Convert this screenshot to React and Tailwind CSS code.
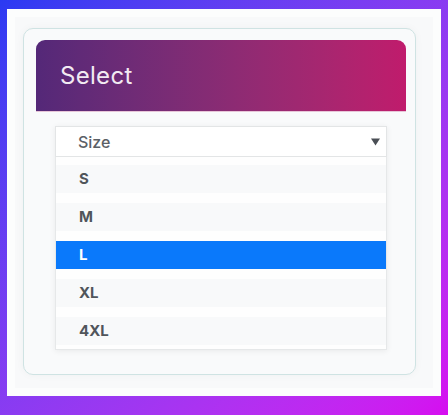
import React from 'react'

const sizes = ['S', 'M', 'L', 'XL', '4XL']

export default function App() {
  return (
    <div className="h-[415px] w-[448px] bg-linear-to-br from-[#2a3af2] to-[#d60cf0] pt-[9px] px-[7px]">
      <div className="border-8 border-white/60 bg-[#f8f9fa] pt-[11px] pl-2 pb-[13px]">
        <div className="w-[393px] rounded-[10px] border border-[#cfe3e3] bg-[#f9fafb] pt-[11px] pl-3 pr-[9px] pb-[24px] shadow-[0_0_8px_rgba(0,0,0,0.04)]">
          <div
            className="h-[72px] rounded-t-[9px] bg-linear-to-r from-[#542878] to-[#c01b6c] border-b border-[#e7c6d8] flex items-center px-6"
            style={{ fontFamily: 'Inter, "Noto Sans", sans-serif' }}
          >
            <span className="text-[24px] text-[#f2eaf2] tracking-[0.3px]">Select</span>
          </div>
          <div
            className="mt-[14px] mx-[19px] shadow-[0_1px_6px_rgba(0,0,0,0.07)]"
            style={{ fontFamily: 'Inter, "Noto Sans", sans-serif' }}
          >
            <div className="h-[31px] border border-[#e3e5e6] bg-white flex items-center justify-between pl-[22px] pr-[6px]">
              <span className="text-[16px] font-medium text-[#5b6066]">Size</span>
              <svg width="9" height="8" viewBox="0 0 9 8">
                <path d="M0 0.5 H9 L4.5 7.5 Z" fill="#4a4f55" />
              </svg>
            </div>
            <div className="border border-t-0 border-[#e6e8e9] bg-[#fefefe] pt-2 pb-1 flex flex-col gap-[10px]">
              {sizes.map((s) => (
                <div
                  key={s}
                  className={
                    s === 'L'
                      ? 'h-[28px] flex items-center pl-[23px] bg-[#0a79fb] text-white text-[15px] font-bold'
                      : 'h-[28px] flex items-center pl-[23px] bg-[#f8f9fa] text-[#50555b] text-[15px] font-bold'
                  }
                >
                  {s}
                </div>
              ))}
            </div>
          </div>
        </div>
      </div>
    </div>
  )
}
